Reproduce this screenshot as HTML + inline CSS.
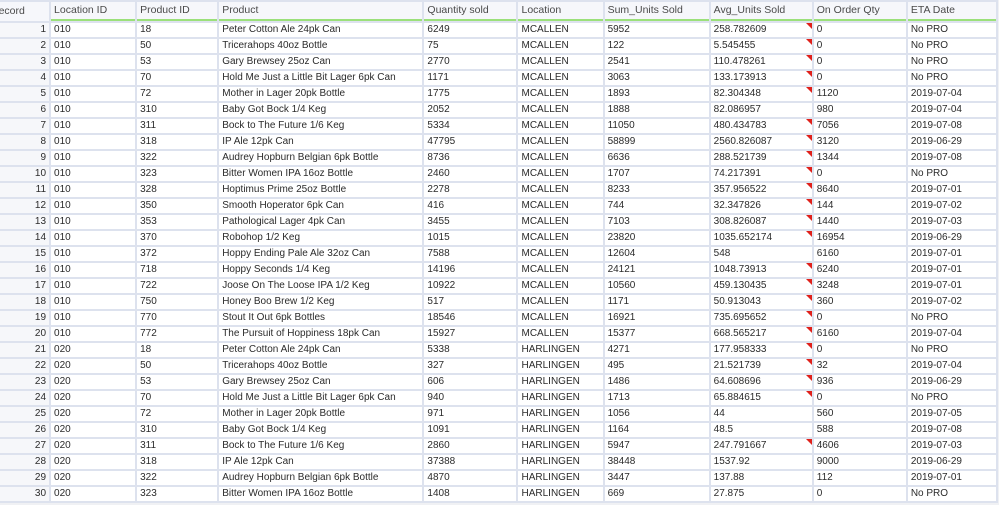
<!DOCTYPE html>
<html><head><meta charset="utf-8"><style>
html,body{margin:0;padding:0;background:#f0f1f4;width:999px;height:505px;overflow:hidden}
table{position:absolute;left:-14px;top:0;border-collapse:separate;border-spacing:2px;background:#dde2ee;table-layout:fixed;width:1012px;font-family:"Liberation Sans",sans-serif;font-size:10px;color:#2b2b2b}
td,th{height:14px;padding:0 0 0 3px;white-space:nowrap;overflow:hidden;background:#fff;line-height:14px;position:relative}
th{height:17px;font-weight:normal;text-align:left;color:#4a4a4a;background:#f6f7fb;border-bottom:2px solid #9be07a;line-height:17px;font-size:10.5px}
th.r{border-bottom:none;height:19px}
td.r{text-align:right;padding:0 3px 0 0;background:#f6f7fa}
td.t::after{content:"";position:absolute;right:0;top:0;border-style:solid;border-width:0 6px 6px 0;border-color:transparent #e0201a transparent transparent}
</style></head><body>
<table>
<colgroup><col style="width:61px"><col style="width:84px"><col style="width:80px"><col style="width:203px"><col style="width:92px"><col style="width:84px"><col style="width:104px"><col style="width:101px"><col style="width:92px"><col style="width:88px"></colgroup>
<tr><th class="r" style="text-align:right;padding-right:26px">Record</th><th>Location ID</th><th>Product ID</th><th>Product</th><th>Quantity sold</th><th>Location</th><th>Sum_Units Sold</th><th>Avg_Units Sold</th><th>On Order Qty</th><th>ETA Date</th></tr>
<tr><td class="r">1</td><td>010</td><td>18</td><td>Peter Cotton Ale 24pk Can</td><td>6249</td><td>MCALLEN</td><td>5952</td><td class="t">258.782609</td><td>0</td><td>No PRO</td></tr>
<tr><td class="r">2</td><td>010</td><td>50</td><td>Tricerahops 40oz Bottle</td><td>75</td><td>MCALLEN</td><td>122</td><td class="t">5.545455</td><td>0</td><td>No PRO</td></tr>
<tr><td class="r">3</td><td>010</td><td>53</td><td>Gary Brewsey 25oz Can</td><td>2770</td><td>MCALLEN</td><td>2541</td><td class="t">110.478261</td><td>0</td><td>No PRO</td></tr>
<tr><td class="r">4</td><td>010</td><td>70</td><td>Hold Me Just a Little Bit Lager 6pk Can</td><td>1171</td><td>MCALLEN</td><td>3063</td><td class="t">133.173913</td><td>0</td><td>No PRO</td></tr>
<tr><td class="r">5</td><td>010</td><td>72</td><td>Mother in Lager 20pk Bottle</td><td>1775</td><td>MCALLEN</td><td>1893</td><td class="t">82.304348</td><td>1120</td><td>2019-07-04</td></tr>
<tr><td class="r">6</td><td>010</td><td>310</td><td>Baby Got Bock 1/4 Keg</td><td>2052</td><td>MCALLEN</td><td>1888</td><td>82.086957</td><td>980</td><td>2019-07-04</td></tr>
<tr><td class="r">7</td><td>010</td><td>311</td><td>Bock to The Future 1/6 Keg</td><td>5334</td><td>MCALLEN</td><td>11050</td><td class="t">480.434783</td><td>7056</td><td>2019-07-08</td></tr>
<tr><td class="r">8</td><td>010</td><td>318</td><td>IP Ale 12pk Can</td><td>47795</td><td>MCALLEN</td><td>58899</td><td class="t">2560.826087</td><td>3120</td><td>2019-06-29</td></tr>
<tr><td class="r">9</td><td>010</td><td>322</td><td>Audrey Hopburn Belgian 6pk Bottle</td><td>8736</td><td>MCALLEN</td><td>6636</td><td class="t">288.521739</td><td>1344</td><td>2019-07-08</td></tr>
<tr><td class="r">10</td><td>010</td><td>323</td><td>Bitter Women IPA 16oz Bottle</td><td>2460</td><td>MCALLEN</td><td>1707</td><td class="t">74.217391</td><td>0</td><td>No PRO</td></tr>
<tr><td class="r">11</td><td>010</td><td>328</td><td>Hoptimus Prime 25oz Bottle</td><td>2278</td><td>MCALLEN</td><td>8233</td><td class="t">357.956522</td><td>8640</td><td>2019-07-01</td></tr>
<tr><td class="r">12</td><td>010</td><td>350</td><td>Smooth Hoperator 6pk Can</td><td>416</td><td>MCALLEN</td><td>744</td><td class="t">32.347826</td><td>144</td><td>2019-07-02</td></tr>
<tr><td class="r">13</td><td>010</td><td>353</td><td>Pathological Lager 4pk Can</td><td>3455</td><td>MCALLEN</td><td>7103</td><td class="t">308.826087</td><td>1440</td><td>2019-07-03</td></tr>
<tr><td class="r">14</td><td>010</td><td>370</td><td>Robohop 1/2 Keg</td><td>1015</td><td>MCALLEN</td><td>23820</td><td class="t">1035.652174</td><td>16954</td><td>2019-06-29</td></tr>
<tr><td class="r">15</td><td>010</td><td>372</td><td>Hoppy Ending Pale Ale 32oz Can</td><td>7588</td><td>MCALLEN</td><td>12604</td><td>548</td><td>6160</td><td>2019-07-01</td></tr>
<tr><td class="r">16</td><td>010</td><td>718</td><td>Hoppy Seconds 1/4 Keg</td><td>14196</td><td>MCALLEN</td><td>24121</td><td class="t">1048.73913</td><td>6240</td><td>2019-07-01</td></tr>
<tr><td class="r">17</td><td>010</td><td>722</td><td>Joose On The Loose IPA 1/2 Keg</td><td>10922</td><td>MCALLEN</td><td>10560</td><td class="t">459.130435</td><td>3248</td><td>2019-07-01</td></tr>
<tr><td class="r">18</td><td>010</td><td>750</td><td>Honey Boo Brew 1/2 Keg</td><td>517</td><td>MCALLEN</td><td>1171</td><td class="t">50.913043</td><td>360</td><td>2019-07-02</td></tr>
<tr><td class="r">19</td><td>010</td><td>770</td><td>Stout It Out 6pk Bottles</td><td>18546</td><td>MCALLEN</td><td>16921</td><td class="t">735.695652</td><td>0</td><td>No PRO</td></tr>
<tr><td class="r">20</td><td>010</td><td>772</td><td>The Pursuit of Hoppiness 18pk Can</td><td>15927</td><td>MCALLEN</td><td>15377</td><td class="t">668.565217</td><td>6160</td><td>2019-07-04</td></tr>
<tr><td class="r">21</td><td>020</td><td>18</td><td>Peter Cotton Ale 24pk Can</td><td>5338</td><td>HARLINGEN</td><td>4271</td><td class="t">177.958333</td><td>0</td><td>No PRO</td></tr>
<tr><td class="r">22</td><td>020</td><td>50</td><td>Tricerahops 40oz Bottle</td><td>327</td><td>HARLINGEN</td><td>495</td><td class="t">21.521739</td><td>32</td><td>2019-07-04</td></tr>
<tr><td class="r">23</td><td>020</td><td>53</td><td>Gary Brewsey 25oz Can</td><td>606</td><td>HARLINGEN</td><td>1486</td><td class="t">64.608696</td><td>936</td><td>2019-06-29</td></tr>
<tr><td class="r">24</td><td>020</td><td>70</td><td>Hold Me Just a Little Bit Lager 6pk Can</td><td>940</td><td>HARLINGEN</td><td>1713</td><td class="t">65.884615</td><td>0</td><td>No PRO</td></tr>
<tr><td class="r">25</td><td>020</td><td>72</td><td>Mother in Lager 20pk Bottle</td><td>971</td><td>HARLINGEN</td><td>1056</td><td>44</td><td>560</td><td>2019-07-05</td></tr>
<tr><td class="r">26</td><td>020</td><td>310</td><td>Baby Got Bock 1/4 Keg</td><td>1091</td><td>HARLINGEN</td><td>1164</td><td>48.5</td><td>588</td><td>2019-07-08</td></tr>
<tr><td class="r">27</td><td>020</td><td>311</td><td>Bock to The Future 1/6 Keg</td><td>2860</td><td>HARLINGEN</td><td>5947</td><td class="t">247.791667</td><td>4606</td><td>2019-07-03</td></tr>
<tr><td class="r">28</td><td>020</td><td>318</td><td>IP Ale 12pk Can</td><td>37388</td><td>HARLINGEN</td><td>38448</td><td>1537.92</td><td>9000</td><td>2019-06-29</td></tr>
<tr><td class="r">29</td><td>020</td><td>322</td><td>Audrey Hopburn Belgian 6pk Bottle</td><td>4870</td><td>HARLINGEN</td><td>3447</td><td>137.88</td><td>112</td><td>2019-07-01</td></tr>
<tr><td class="r">30</td><td>020</td><td>323</td><td>Bitter Women IPA 16oz Bottle</td><td>1408</td><td>HARLINGEN</td><td>669</td><td>27.875</td><td>0</td><td>No PRO</td></tr>
</table>
</body></html>
